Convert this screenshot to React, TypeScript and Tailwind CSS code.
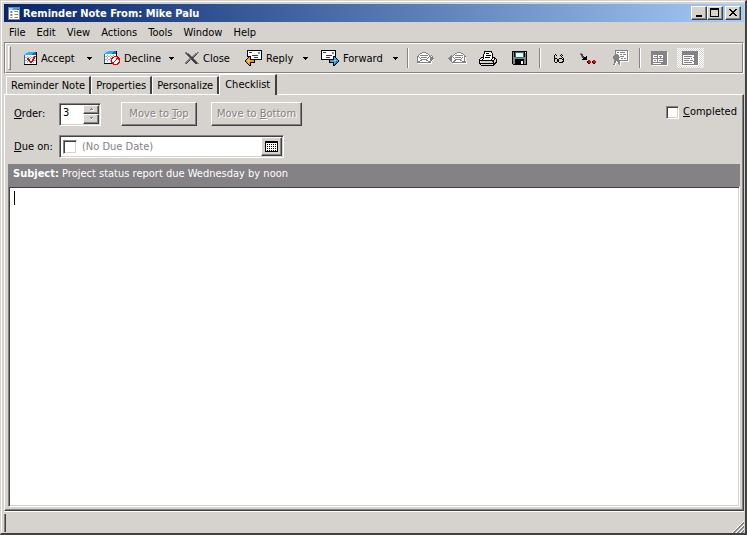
import { useState } from 'react';
import type { ReactNode } from 'react';

const raised =
  'border border-t-white border-l-white border-b-[#404040] border-r-[#404040] shadow-[inset_-1px_-1px_0_#848284]';
const sunken =
  'border border-t-[#848284] border-l-[#848284] border-b-white border-r-white shadow-[inset_1px_1px_0_#404040,inset_-1px_-1px_0_#d6d3ce]';
const engraved = 'text-[#848284] [text-shadow:1px_1px_0_#fff]';

const palette: Record<string, string> = {
  k: '#000000',
  d: '#404040',
  g: '#848284',
  l: '#b5b2b5',
  s: '#d6d3ce',
  w: '#ffffff',
  b: '#0873bd',
  c: '#31aaf7',
  a: '#9cd7ff',
  r: '#e70000',
  o: '#f79a08',
  y: '#ffc73a',
  t: '#008284',
};

// Bitmap icons: one character per pixel, '.' is transparent
function Pixels({ rows, className = '' }: { rows: string[]; className?: string }) {
  const width = Math.max(...rows.map((row) => row.length));
  return (
    <svg
      width={width}
      height={rows.length}
      viewBox={`0 0 ${width} ${rows.length}`}
      shapeRendering="crispEdges"
      className={`shrink-0 ${className}`}
      aria-hidden="true"
    >
      {rows.flatMap((row, y) =>
        row.split('').map((ch, x) =>
          ch === '.' ? null : <rect key={`${x}-${y}`} x={x} y={y} width="1" height="1" fill={palette[ch]} />
        )
      )}
    </svg>
  );
}

const icons = {
  app: [
    'gggggggggggg',
    'gaaaaccccccg',
    'gaaacccccbbg',
    'gwwwwwwwwwwg',
    'gwlgswlgggwg',
    'gwlgswwwwwwg',
    'gwwwwwwwwwwg',
    'gwlgswlgggwg',
    'gwlgswwwwwwg',
    'gwwwwwwwwwwg',
    'gwlgswlgggwg',
    'gwwwwwwwwwwg',
    'gggggggggggg',
  ],
  accept: [
    'aaaaccccccbbk',
    'aacccccccbbbk',
    'acccccccbbbbk',
    'bwwwwwwwwwwwk',
    'bwwlwwlwwlrrk',
    'bllwllwllrrwk',
    'bwwrrwlwwrrwk',
    'bwwrrrwwrrwwk',
    'bllwrrwwrrllk',
    'bwwlwrrrrwwwk',
    'bwwlwwrrwlwwk',
    'bwwwwwwwwwwwk',
    'kkkkkkkkkkkkk',
  ],
  decline: [
    'aaaaccccccbbk...',
    'aacccccccbbbk...',
    'acccccccbbbbk...',
    'bwwwwwwwwwwwk...',
    'bwwlwwlwwlwwk...',
    'bllwllwllwrrrr..',
    'bwwlwwlwrrwwwrr.',
    'bwwlwwlrrwwwrrrr',
    'bllwllwrwwwwrwrr',
    'bwwlwwlrwwwrwwwr',
    'bwwlwwlrwwrwwwwr',
    'bwwwwwwrrrwwwwrr',
    'kkkkkkkkrrwwwrr.',
    '.........rrrrr..',
  ],
  close: [
    'gg..........gg',
    'gdgg......ggg.',
    '.gddg....ggd..',
    '..gddg..ggd...',
    '...gddgggd....',
    '....gdddd.....',
    '....ggddg.....',
    '...gggdddg....',
    '..ggd..dddg...',
    '.ggd....dddg..',
    'ggd......dddg.',
    'gd........ddgg',
  ],
  reply: [
    '..kkkkkkkkkkkkkkk',
    '..kwwwwwwwwwwwwwk',
    '..kwdddwwwwwwccwk',
    '..kwwwwwwwwwwccwk',
    '..kwwwwwwwwwwwwwk',
    '..kwwwwddddddwwwk',
    '..kkkkwwwwwwwwwwk',
    '...kokwwwddddwwwk',
    '..kookwwwwwwwwwwk',
    '.koyokkkkkkkkkkkk',
    'koyyyooook.......',
    'kooyyooook.......',
    '.koyokkkkk.......',
    '..kook...........',
    '...kok...........',
    '....kk...........',
  ],
  forward: [
    'kkkkkkkkkkkkkkk...',
    'kwwwwwwwwwwwwwk...',
    'kwdddwwwwwwccwk...',
    'kwwwwwwwwwwccwk...',
    'kwwwwwwwwwwwwwk...',
    'kwwwwddddddwwwk...',
    'kwwwwwwwwwwwkkk...',
    'kwwwwddddwwwkck...',
    'kwwwwwwwwwwwkcck..',
    'kkkkkkkkkkkkkccck.',
    '........kccccaacck',
    '........kccccccbck',
    '........kkkkkccbk.',
    '............kcbk..',
    '............kbk...',
    '............kk....',
  ],
  openNext: [
    '.....gggg.........',
    '...ggwwwwgg.......',
    '..gwwwwwwwwg......',
    '.gwggggggggwg.g...',
    'ggwwwwwwwwwwggwg..',
    'gwgwggggggwgwggg..',
    'gwwgwwwwwwgwwgggg.',
    'gwwwggggggwwwgggw.',
    'gwwggwwwwggwwggw..',
    'gggwwwwwwwwgggw...',
    'ggggggggggggggw...',
    '.wwwwwwwwwwwwww...',
  ],
  openPrev: [
    '.........gggg......',
    '.......ggwwwwgg....',
    '......gwwwwwwwwg...',
    '...g.gwggggggggwg..',
    '..gggwwwwwwwwwwwgg.',
    '.gggwgwggggggwgwgw.',
    'ggggwwgwwwwwwgwwgw.',
    '.gggwwwggggggwwwgw.',
    '..ggwwggwwwwggwwgw.',
    '...gwggwwwwwwwggggw',
    '....ggggggggggggggw',
    '.....wwwwwwwwwwwwww',
  ],
  print: [
    '.....kkkkkkkk.....',
    '.....kwwwwwwk.....',
    '.....kwkkkwwwk....',
    '....kwwwwwwwwk....',
    '....kwwkkkkkwk....',
    '....kwwwwwwwwk....',
    '..kkkwkkkkkwwkkk..',
    '.kswkwwwwwwwwkwkk.',
    'kwwkwwwwwwwwkwwksk',
    'kkkkkkkkkkkkkkkssk',
    'kwsssssssssssrkssk',
    'kssssssssssssskskk',
    'kkkkkkkkkkkkkkkkk.',
    '.kwsssssssssswkk..',
    '..kkkkkkkkkkkkk...',
  ],
  save: [
    'kkkkkkkkkkkkkkk',
    'kgktttttttttkwk',
    'kgktwwwwwwwtkgk',
    'kgktwwwwwwwtkgk',
    'kgktwwwwwwwtkgk',
    'kgktwwwwwwwtkgk',
    'kggttttttttgggk',
    'kgggggggggggggk',
    'kggkkkkkkkkkggk',
    'kggkkkkkkkkkggk',
    'kggkkkkkkwwkggk',
    'kggkkkkkkwwkggk',
    'kggkkkkkkwwkggk',
    '.kkkkkkkkkkkkkk',
  ],
  glasses: [
    '.k.....k..',
    'k.k...k.k.',
    'k......k..',
    'k.......k.',
    'kkk..kkk.k',
    'k..kk...kk',
    'k..kk....k',
    'k..kk...kk',
    '.kk..kkkk.',
  ],
  route: [
    'gg..............',
    'gdd.............',
    '.dd.............',
    '.gdd..k.........',
    '..ddkkk.........',
    '...kkkk.........',
    '..kkkkk.........',
    '........rr...rr.',
    '.......krrr.krrr',
    '.......krrr.krrr',
    '........kk...kk.',
  ],
  certificate: [
    '..ggggggggggggg.',
    '..gwwwwwwwwwwwgw',
    '..gwggwgggggwwgw',
    '..gwwwwwwwwwwwgw',
    '..gggwwggwgggwgw',
    '.gggggwwwwwwwwgw',
    'ggggggwggggwwwgw',
    'gggggggwwwwwwwgw',
    'ggggggwwggwggwgw',
    '.gggggwwwwwwwwgw',
    '.ggggggggggggggw',
    '.ggwgggwwwwwwwww',
    '.ggwwggw........',
    '.gw..ggw........',
    'ggw...gw........',
    '.w.....w........',
  ],
  preview: [
    'gggggggggggggggg.',
    'ggggggggggggggggw',
    'ggggggggggggggggw',
    'ggggggggggggggggw',
    'ggwwwwgwwwwwggggw',
    'ggwggggwgggwggggw',
    'ggwwwwgwwgwwggggw',
    'ggggggggggggggggw',
    'ggwwwwgwwwwwggggw',
    'ggwggwgwggggggggw',
    'ggwwwwgwwwwwggggw',
    'ggggggggggggggggw',
    'ggwwwwwwwwggggggw',
    'ggggggggggggggggw',
    '.wwwwwwwwwwwwwwww',
  ],
  notes: [
    'gggggggggggggggg.',
    'ggggggggggggggggw',
    'ggggggggggggggggw',
    'ggggggggggggggggw',
    'gwwwwwwwwwwwggggw',
    'gwggggggggwwggggw',
    'gwwwwwwwwwwgggggw',
    'gwggggggwgwwggggw',
    'gwwwwwwwwwwwggggw',
    'gwgggggwgggwggggw',
    'gwwwwwwwwwwgggggw',
    'gwggggggggwwggggw',
    'gwwwwwwwwwwwggggw',
    'ggggggggggggggggw',
    '.wwwwwwwwwwwwwwww',
  ],
  calendar: [
    'kkkkkkkkkkkkk',
    'kkkkkkkkkkkkk',
    'kwwwwwwwwwwwk',
    'kwkwkwkwkwkwk',
    'kwwwwwwwwwwwk',
    'kwkwkwkwkwkwk',
    'kwwwwwwwwwwwk',
    'kwkwkwkwkwkwk',
    'kwwwwwwwwwwwk',
    'kwkwkwkwkwkwk',
    'kkkkkkkkkkkkk',
  ],
  down: ['kkkkk', '.kkk.', '..k..'],
  spinUp: ['..g..', '.gggw', '..www'],
  spinDown: ['.ggg.', '..gw.', '..w..'],
  minimize: ['......', '......', '......', '......', '......', '......', 'kkkkkk', 'kkkkkk'],
  maximize: [
    'kkkkkkkkk',
    'kkkkkkkkk',
    'k.......k',
    'k.......k',
    'k.......k',
    'k.......k',
    'k.......k',
    'k.......k',
    'kkkkkkkkk',
  ],
  x: ['kk....kk', '.kk..kk.', '..kkkk..', '...kk...', '..kkkk..', '.kk..kk.', 'kk....kk'],
};

const menus = ['File', 'Edit', 'View', 'Actions', 'Tools', 'Window', 'Help'];
const tabs = ['Reminder Note', 'Properties', 'Personalize', 'Checklist'];

function TitleButton({ label, rows, className = '' }: { label: string; rows: string[]; className?: string }) {
  return (
    <button
      type="button"
      aria-label={label}
      className={`flex h-[14px] w-4 items-center justify-center bg-[#d6d3ce] pr-px pb-px ${raised} ${className}`}
    >
      <Pixels rows={rows} />
    </button>
  );
}

function ToolButton({ label, rows, className }: { label: string; rows: string[]; className: string }) {
  return (
    <button type="button" className={`flex items-center gap-1 whitespace-nowrap ${className}`}>
      <Pixels rows={rows} />
      <span className="pt-px">{label}</span>
    </button>
  );
}

function DropButton({ label, className = 'w-7' }: { label: string; className?: string }) {
  return (
    <button type="button" aria-label={`${label} options`} className={`flex h-6 items-center justify-center ${className}`}>
      <Pixels rows={icons.down} />
    </button>
  );
}

function IconButton({ label, rows, className = 'w-8' }: { label: string; rows: string[]; className?: string }) {
  return (
    <button type="button" aria-label={label} className={`flex items-center justify-center ${className}`}>
      <Pixels rows={rows} />
    </button>
  );
}

function Separator() {
  return <div className="h-5 w-0.5 shrink-0 border-r border-l border-l-[#848284] border-r-white" />;
}

function BevelButton({ children, className }: { children: ReactNode; className: string }) {
  return (
    <button type="button" disabled className={`h-6 whitespace-nowrap ${raised} ${engraved} ${className}`}>
      {children}
    </button>
  );
}

export default function App() {
  const [active, setActive] = useState('Checklist');
  const [order, setOrder] = useState(3);
  const [note, setNote] = useState('');

  return (
    <div className="flex h-screen flex-col border-t border-r-2 border-b-2 border-l border-t-[#d6d3ce] border-r-[#404040] border-b-[#404040] border-l-[#d6d3ce] bg-[#d6d3ce] font-['DejaVu_Sans_Condensed','DejaVu_Sans',sans-serif] text-[11px] leading-[14px] text-black">
      <div className="flex min-h-0 flex-1 flex-col border-t border-l border-white pt-0.5 pr-px pl-0.5">
        <header className="flex h-[18px] shrink-0 items-center bg-linear-to-r from-[#08246b] to-[#a5cbf7] pr-[3px] pl-1">
          <Pixels rows={icons.app} />
          <h1 className="ml-[3px] flex-1 pt-0.5 font-bold whitespace-nowrap text-white">
            Reminder Note From: Mike Palu
          </h1>
          <TitleButton label="Minimize" rows={icons.minimize} />
          <TitleButton label="Maximize" rows={icons.maximize} />
          <TitleButton label="Close" rows={icons.x} className="ml-0.5" />
        </header>

        <nav className="flex h-5 shrink-0 items-center gap-[11px] pt-0.5 pl-[5px]">
          {menus.map((menu) => (
            <button key={menu} type="button">
              {menu}
            </button>
          ))}
        </nav>

        <div className="flex h-8 shrink-0 border border-t-[#848284] border-r-white border-b-white border-l-[#848284]">
          <div className="flex flex-1 items-center border border-t-white border-r-[#848284] border-b-[#848284] border-l-white pl-0.5">
            <div className="h-6 w-[3px] border border-t-white border-r-[#848284] border-b-[#848284] border-l-white" />
            <ToolButton label="Accept" rows={icons.accept} className="ml-[13px] w-[51px]" />
            <DropButton label="Accept" />
            <ToolButton label="Decline" rows={icons.decline} className="ml-px w-[54px]" />
            <DropButton label="Decline" className="w-[26px]" />
            <ToolButton label="Close" rows={icons.close} className="ml-px w-[60px]" />
            <ToolButton label="Reply" rows={icons.reply} className="w-[46px]" />
            <DropButton label="Reply" />
            <ToolButton label="Forward" rows={icons.forward} className="ml-0.5 w-[62px]" />
            <DropButton label="Forward" className="w-6" />
            <Separator />
            <IconButton label="Open next" rows={icons.openNext} className="w-[34px]" />
            <IconButton label="Open previous" rows={icons.openPrev} className="w-7" />
            <IconButton label="Print" rows={icons.print} className="w-[34px]" />
            <IconButton label="Save" rows={icons.save} className="w-7" />
            <div className="w-[6px]" />
            <Separator />
            <IconButton label="Mark read later" rows={icons.glasses} className="w-9" />
            <IconButton label="Routing" rows={icons.route} className="w-[22px]" />
            <IconButton label="Certificate" rows={icons.certificate} className="w-10 pl-1" />
            <Separator />
            <IconButton label="Preview" rows={icons.preview} className="w-9" />
            <IconButton
              label="Notes"
              rows={icons.notes}
              className="h-5 w-[27px] bg-[repeating-conic-gradient(#d6d3ce_0_25%,#fff_0_50%)] bg-size-[2px_2px]"
            />
          </div>
        </div>

        <div role="tablist" className="flex h-5 shrink-0 items-end pl-0.5">
          {tabs.map((tab) => (
            <button
              key={tab}
              type="button"
              role="tab"
              aria-selected={tab === active}
              onClick={() => setActive(tab)}
              className={
                tab === active
                  ? 'relative -mb-px h-[21px] border-t border-r-2 border-l border-t-white border-r-[#404040] border-l-white bg-[#d6d3ce] px-[5px] pb-px whitespace-nowrap'
                  : 'h-[18px] border-t border-r-2 border-l border-t-white border-r-[#404040] border-l-white px-1 pt-px whitespace-nowrap'
              }
            >
              {tab}
            </button>
          ))}
        </div>

        <main className="flex min-h-0 flex-1 flex-col border border-t-white border-r-[#404040] border-b-[#404040] border-l-white pr-[3px] pb-[3px] pl-[3px] shadow-[inset_-1px_-1px_0_#848284]">
          <div className="flex items-start pt-[7px] pr-[3px] pl-[6px]">
            <div className="flex items-center">
              <label htmlFor="order" className="w-[45px]">
                <u>O</u>rder:
              </label>
              <div className={`flex h-[23px] w-[42px] bg-white p-px ${sunken}`}>
                <input
                  id="order"
                  type="text"
                  value={order}
                  onChange={(e) => setOrder(Number(e.target.value) || 0)}
                  className="w-0 flex-1 bg-white pb-0.5 pl-0.5 outline-none"
                />
                <div className="flex w-4 flex-col">
                  <button
                    type="button"
                    aria-label="Increase order"
                    onClick={() => setOrder(order + 1)}
                    className={`flex flex-1 items-center justify-center bg-[#d6d3ce] ${raised}`}
                  >
                    <Pixels rows={icons.spinUp} />
                  </button>
                  <button
                    type="button"
                    aria-label="Decrease order"
                    onClick={() => setOrder(order - 1)}
                    className={`flex flex-1 items-center justify-center bg-[#d6d3ce] ${raised}`}
                  >
                    <Pixels rows={icons.spinDown} />
                  </button>
                </div>
              </div>
              <BevelButton className="ml-5 w-[76px]">
                Move to <u>T</u>op
              </BevelButton>
              <BevelButton className="ml-[14px] w-[91px]">
                Move to <u>B</u>ottom
              </BevelButton>
            </div>
            <label className="ml-auto flex items-center gap-1 pt-[3px]">
              <input type="checkbox" className={`h-[13px] w-[13px] appearance-none bg-white ${sunken}`} />
              <span>
                <u>C</u>ompleted
              </span>
            </label>
          </div>

          <div className="flex items-center pt-[9px] pb-[6px] pl-[6px]">
            <label htmlFor="due" className="w-[45px] whitespace-nowrap">
              <u>D</u>ue on:
            </label>
            <div className={`flex h-[23px] w-[225px] items-center bg-white p-px ${sunken}`}>
              <input
                type="checkbox"
                aria-label="Use due date"
                className={`ml-0.5 h-[14px] w-[14px] appearance-none bg-white ${sunken}`}
              />
              <input
                id="due"
                type="text"
                readOnly
                value="(No Due Date)"
                className="ml-[5px] w-0 flex-1 text-[#848284] outline-none"
              />
              <button
                type="button"
                aria-label="Pick date"
                className={`flex h-[19px] w-[21px] items-center justify-center bg-[#d6d3ce] ${raised}`}
              >
                <Pixels rows={icons.calendar} />
              </button>
            </div>
          </div>

          <div className="h-[22px] shrink-0 bg-[#848284] px-[5px] pt-[3px] text-white">
            <b>Subject:</b> Project status report due Wednesday by noon
          </div>
          <div className={`flex min-h-0 flex-1 bg-white p-1 ${sunken}`}>
            <div className="ml-px h-[14px] w-px bg-black" />
            <textarea
              aria-label="Note"
              value={note}
              onChange={(e) => setNote(e.target.value)}
              className="flex-1 resize-none outline-none"
            />
          </div>
        </main>

        <footer className="flex h-[22px] shrink-0 items-end justify-between border-t border-white">
          <div className="h-[18px] w-0.5 self-center border-r border-l border-l-[#848284] border-r-[#404040]" />
          <svg width="12" height="12" viewBox="0 0 12 12" aria-hidden="true">
            <path d="M0 12 12 0M4 12l8-8M8 12l4-4" stroke="#fff" />
            <path d="M1 12 12 1M2 12 12 2M5 12l7-7M6 12l6-6M9 12l3-3M10 12l2-2" stroke="#848284" />
          </svg>
        </footer>
      </div>
    </div>
  );
}
